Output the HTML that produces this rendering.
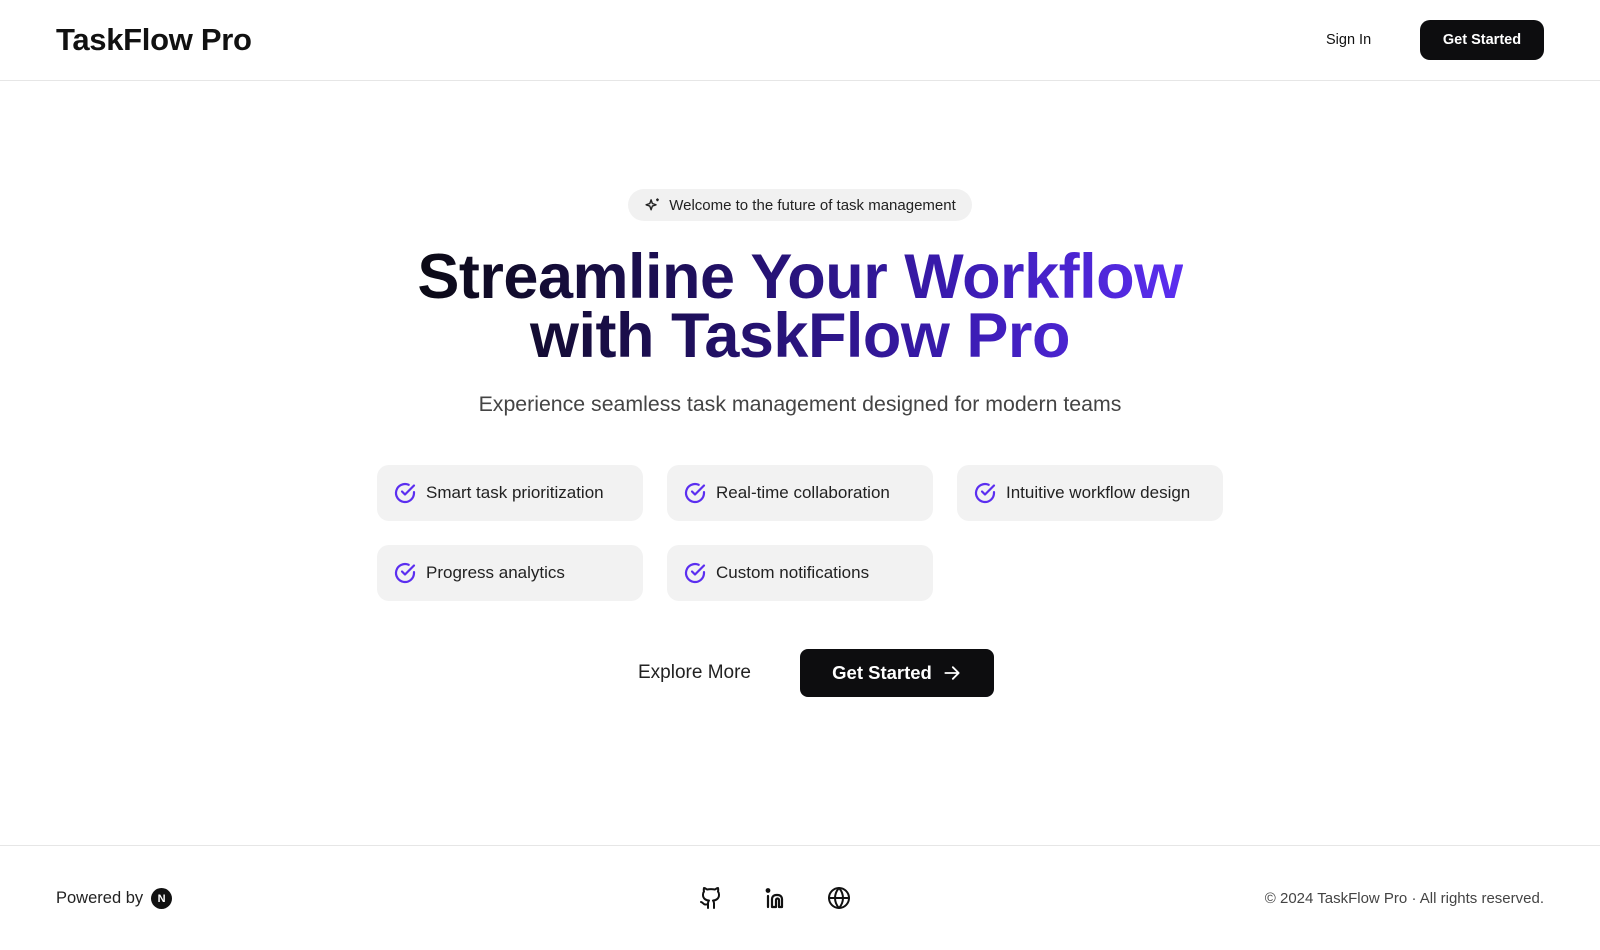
<!DOCTYPE html>
<html><head><meta charset="utf-8">
<style>
*{box-sizing:border-box;margin:0;padding:0}
body{width:1600px;height:950px;background:#fff;font-family:"Liberation Sans",sans-serif;color:#111;position:relative;overflow:hidden}
.abs{position:absolute}
.logo{left:56px;top:22px;font-size:31px;font-weight:bold;letter-spacing:-0.3px;color:#111}
.signin{left:1326px;top:32px;font-size:14.5px;color:#111}
.btn1{left:1420px;top:20px;width:124px;height:40px;background:#0d0d0f;color:#fff;border-radius:10px;font-size:14.5px;font-weight:bold;display:flex;align-items:center;justify-content:center}
.hr1{left:0;top:80px;width:1600px;height:1px;background:#e6e6e6}
.badge{left:628px;top:189px;width:344px;height:32px;background:#f1f1f1;border-radius:16px;font-size:15px;color:#222;display:flex;align-items:center;justify-content:center;gap:8px}
.h1{left:0;width:1600px;top:248px;text-align:center;font-size:63px;font-weight:bold;line-height:59px;letter-spacing:-0.5px}
.h1 span{display:inline-block;background:linear-gradient(90deg,#0b0a14 0%,#1e0f5a 35%,#3a1bb0 70%,#5b2ef0 100%);-webkit-background-clip:text;background-clip:text;color:transparent}
.sub{left:0;width:1600px;top:392px;text-align:center;font-size:21.3px;color:#444}
.card{width:266px;height:56px;background:#f2f2f2;border-radius:12px;display:flex;align-items:center;padding-left:16px;gap:9px;font-size:17px;color:#222}
.explore{left:638px;top:662px;font-size:19px;color:#222}
.btn2{left:800px;top:649px;width:194px;height:48px;background:#0d0d0f;color:#fff;border-radius:8px;font-size:18.5px;font-weight:bold;display:flex;align-items:center;justify-content:center;gap:10px}
.hr2{left:0;top:845px;width:1600px;height:1px;background:#e6e6e6}
.pow{left:56px;top:888px;font-size:16.5px;color:#222;display:flex;align-items:center;gap:8px}
.n{width:21px;height:21px;border-radius:50%;background:#111;color:#fff;font-size:11px;font-weight:bold;display:flex;align-items:center;justify-content:center}
.copy{right:56px;top:890px;font-size:15px;color:#444}
</style></head><body>
<div class="abs logo">TaskFlow Pro</div>
<div class="abs signin">Sign In</div>
<div class="abs btn1">Get Started</div>
<div class="abs hr1"></div>

<div class="abs badge"><svg width="17" height="17" viewBox="0 0 24 24" fill="none" stroke="#222" stroke-width="2" stroke-linejoin="round"><path d="M10 4l1.8 5.2L17 11l-5.2 1.8L10 18l-1.8-5.2L3 11l5.2-1.8z"/><path d="M19 2v4M17 4h4"/></svg>Welcome to the future of task management</div>

<div class="abs h1"><span>Streamline Your Workflow<br>with TaskFlow Pro</span></div>
<div class="abs sub">Experience seamless task management designed for modern teams</div>

<svg width="0" height="0" style="position:absolute"><symbol id="ck" viewBox="0 0 24 24"><path d="M21 11.1V12a9 9 0 1 1-5.3-8.2" fill="none" stroke="#5b2ef0" stroke-width="2.2" stroke-linecap="round"/><path d="M21 4.5L12 13.5l-3-3" fill="none" stroke="#5b2ef0" stroke-width="2.2" stroke-linecap="round" stroke-linejoin="round"/></symbol></svg>
<div class="abs card" style="left:377px;top:465px"><svg width="24" height="24"><use href="#ck"/></svg>Smart task prioritization</div>
<div class="abs card" style="left:667px;top:465px"><svg width="24" height="24"><use href="#ck"/></svg>Real-time collaboration</div>
<div class="abs card" style="left:957px;top:465px"><svg width="24" height="24"><use href="#ck"/></svg>Intuitive workflow design</div>
<div class="abs card" style="left:377px;top:545px"><svg width="24" height="24"><use href="#ck"/></svg>Progress analytics</div>
<div class="abs card" style="left:667px;top:545px"><svg width="24" height="24"><use href="#ck"/></svg>Custom notifications</div>

<div class="abs explore">Explore More</div>
<div class="abs btn2">Get Started <svg width="20" height="20" viewBox="0 0 24 24" fill="none" stroke="#fff" stroke-width="2.2" stroke-linecap="round" stroke-linejoin="round"><path d="M4 12h16M13 5l7 7-7 7"/></svg></div>

<div class="abs hr2"></div>
<div class="abs pow">Powered by <div class="n">N</div></div>
<svg class="abs" style="left:699px;top:886px" width="24" height="24" viewBox="0 0 24 24" fill="none" stroke="#111" stroke-width="2" stroke-linecap="round" stroke-linejoin="round"><path d="M15 22v-4a4.8 4.8 0 0 0-1-3.5c3 0 6-2 6-5.5.1-1.3-.3-2.5-1-3.5.3-1.2.3-2.4 0-3.5 0 0-1 0-3 1.5-2.6-.5-5.4-.5-8 0C6 2 5 2 5 2c-.3 1.1-.3 2.3 0 3.5A5.4 5.4 0 0 0 4 9c0 3.5 3 5.5 6 5.5-.4.5-.7 1-.8 1.7-.2.6-.3 1.2-.2 1.8v4"/><path d="M9 18c-4.5 2-5-2-7-2"/></svg>
<svg class="abs" style="left:763px;top:886px" width="24" height="24" viewBox="0 0 24 24" fill="none" stroke="#111" stroke-width="2.2" stroke-linecap="round" stroke-linejoin="round"><path d="M5 10v11"/><circle cx="5" cy="4.5" r="1.3" fill="#111"/><path d="M9 21V13a4 4 0 0 1 4-4h2a4 4 0 0 1 4 4v8h-3v-7a1.5 1.5 0 0 0-3 0v7z"/></svg>
<svg class="abs" style="left:827px;top:886px" width="24" height="24" viewBox="0 0 24 24" fill="none" stroke="#111" stroke-width="2" stroke-linecap="round" stroke-linejoin="round"><circle cx="12" cy="12" r="10"/><path d="M2 12h20M12 2a15 15 0 0 1 4 10 15 15 0 0 1-4 10 15 15 0 0 1-4-10A15 15 0 0 1 12 2z"/></svg>
<div class="abs copy">© 2024 TaskFlow Pro · All rights reserved.</div>
</body></html>
